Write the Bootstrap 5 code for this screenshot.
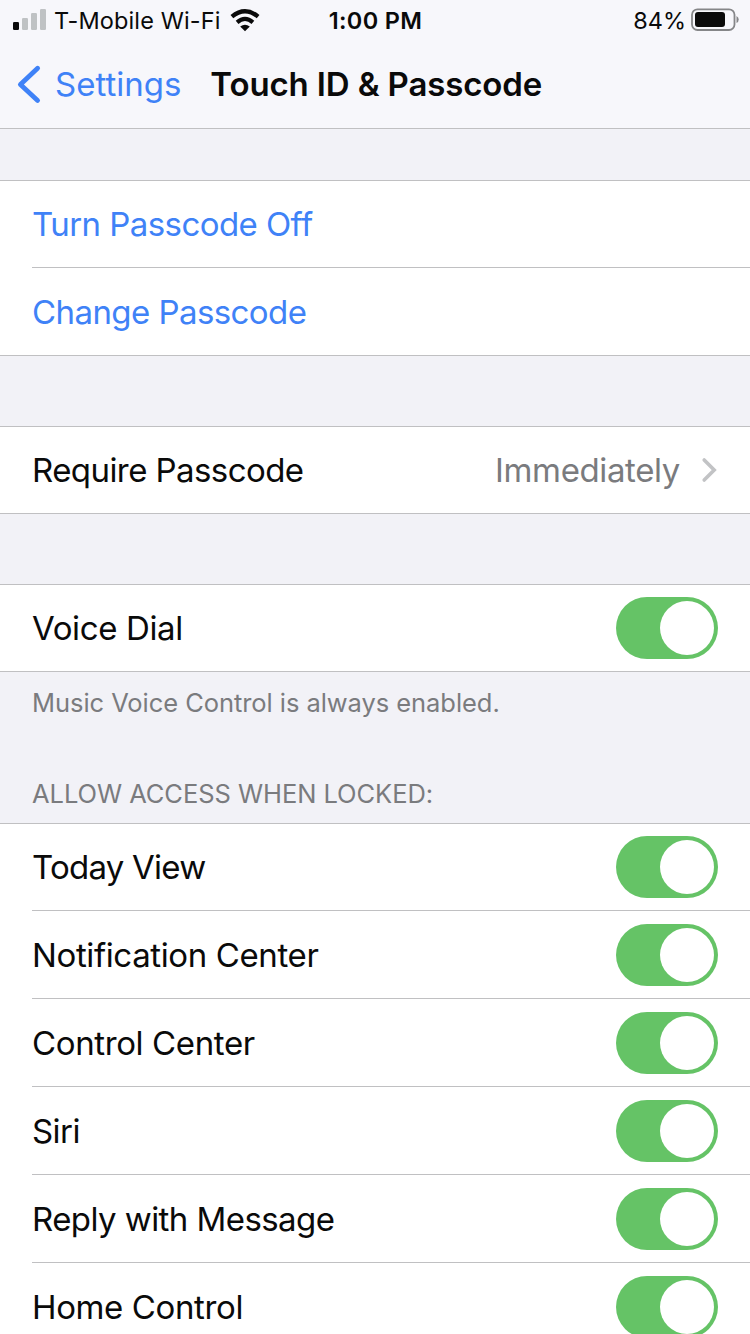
<!DOCTYPE html>
<html lang="en">
<head>
<meta charset="utf-8">
<meta name="viewport" content="width=device-width, initial-scale=1">
<title>Touch ID &amp; Passcode</title>
<link rel="stylesheet" href="https://cdn.jsdelivr.net/npm/bootstrap@5.3.0/dist/css/bootstrap.min.css">
<style>
  :root { --line: #c0c0c2; --blue: #3f82f7; --page: #f2f2f7; --grey: #7a7b7e; }
  html, body { height: 1334px; overflow: hidden; }
  body { background: var(--page); color: #0a0a0a; font-family: Inter, "Liberation Sans", sans-serif; width: 750px; }
  svg { display: block; flex: none; }

  /* status bar and navigation bar */
  .top-area { height: 129px; background: #f7f7fb; border-bottom: 1px solid var(--line); }
  .status-line { height: 41px; font-size: 23.5px; line-height: 41px; padding: 0 11px 0 13px; }
  .status-line .side { width: 315px; }
  .carrier { margin-left: 7px; letter-spacing: .12px; }
  .wifi { margin-left: 9px; }
  .clock { letter-spacing: .3px; margin-right: 1px; }
  .charge { margin-right: 5px; }
  .title-line { height: 87px; padding-left: 17px; font-size: 33px; line-height: 87px; }
  .back-link { color: var(--blue); margin-left: 14px; }
  .page-title { margin-left: 29px; letter-spacing: -.14px; }

  /* grouped settings rows */
  .group-list { background: #fff; border-top: 1px solid var(--line); border-bottom: 1px solid var(--line); }
  .setting { margin-left: 32px; padding: 13px 32px 12px 0; border-bottom: 1px solid var(--line); font-size: 33px; line-height: 62px; letter-spacing: -.57px; }
  .setting:first-child { padding-top: 12px; }
  .setting:last-child { border-bottom: 0; }
  .setting > * { height: 62px; }
  .action { color: var(--blue); }
  .gap-top { margin-top: 51px; }
  .gap-mid { margin-top: 70px; }
  .value-text { color: var(--grey); }
  .track-a { letter-spacing: -.38px; }
  .track-b { letter-spacing: -.75px; }
  .switch-on { width: 102px; height: 62px; padding: 4px; border-radius: 31px; background: #65c366; flex: none; }
  .knob { width: 54px; height: 54px; border-radius: 50%; background: #fff; }
  .note-text { color: var(--grey); font-size: 25.5px; line-height: 32px; padding-left: 32px; letter-spacing: -.06px; }
  .footnote { padding-top: 15px; height: 47px; }
  .heading { padding-top: 59px; height: 104px; }
</style>
</head>
<body>
<header class="top-area">
  <div class="status-line d-flex justify-content-between">
    <div class="side d-flex">
      <svg width="34" height="41" viewBox="0 0 34 41"><rect x="0" y="22" width="6" height="8" rx="1.3" fill="#0a0a0a"/><g fill="#bfc2c4"><rect x="9" y="18" width="6" height="12" rx="1.3"/><rect x="18" y="13" width="6" height="17" rx="1.3"/><rect x="27" y="9" width="6" height="21" rx="1.3"/></g></svg>
      <span class="carrier">T-Mobile Wi-Fi</span>
      <svg class="wifi" width="30" height="41" viewBox="0 0 30 41" fill="none" stroke="#0a0a0a"><path stroke-width="4.3" d="M1.9 16.6Q15 5.8 28.1 16.6"/><path stroke-width="4.2" d="M7.1 22.3Q15 15.5 22.9 22.3"/><path d="M10.2 26.6Q15 22.8 19.8 26.6L15 31.2Z" fill="#0a0a0a" stroke="none"/></svg>
    </div>
    <div class="clock fw-semibold">1:00 PM</div>
    <div class="side d-flex justify-content-end">
      <span class="charge">84%</span>
      <svg width="48" height="41" viewBox="0 0 48 41"><rect x="1" y="9.3" width="42.5" height="20.7" rx="5.5" fill="none" stroke="#858688" stroke-width="1.8"/><rect x="4" y="12" width="30" height="15" rx="3" fill="#0a0a0a"/><path d="M45.5 16q2.2 1 2.2 3.5t-2.2 3.5z" fill="#858688"/></svg>
    </div>
  </div>
  <nav class="title-line d-flex">
    <svg width="24" height="87" viewBox="0 0 24 87" fill="none" stroke="#3f82f7" stroke-width="4.8" stroke-linecap="round" stroke-linejoin="round"><path d="M20.6 27.2L3.4 43.5L20.6 59.4"/></svg>
    <span class="back-link">Settings</span>
    <span class="page-title fw-semibold">Touch ID &amp; Passcode</span>
  </nav>
</header>
<main>
  <section class="group-list gap-top">
    <div class="setting action"><div>Turn Passcode Off</div></div>
    <div class="setting action"><div>Change Passcode</div></div>
  </section>
  <section class="group-list gap-mid">
    <div class="setting d-flex">
      <span class="me-auto">Require Passcode</span>
      <span class="value-text track-a">Immediately</span>
      <svg width="38" height="62" viewBox="0 0 38 62" fill="none" stroke="#c2c3c5" stroke-width="3.6" stroke-linecap="round"><path d="M24.2 21L34.2 31L24.2 41"/></svg>
    </div>
  </section>
  <section class="group-list gap-mid">
    <div class="setting d-flex justify-content-between"><span class="track-a">Voice Dial</span><div class="switch-on d-flex justify-content-end"><div class="knob"></div></div></div>
  </section>
  <div class="note-text footnote">Music Voice Control is always enabled.</div>
  <div class="note-text heading">ALLOW ACCESS WHEN LOCKED:</div>
  <section class="group-list">
    <div class="setting d-flex justify-content-between"><span class="track-b">Today View</span><div class="switch-on d-flex justify-content-end"><div class="knob"></div></div></div>
    <div class="setting d-flex justify-content-between"><span class="track-a">Notification Center</span><div class="switch-on d-flex justify-content-end"><div class="knob"></div></div></div>
    <div class="setting d-flex justify-content-between"><span class="track-a">Control Center</span><div class="switch-on d-flex justify-content-end"><div class="knob"></div></div></div>
    <div class="setting d-flex justify-content-between"><span>Siri</span><div class="switch-on d-flex justify-content-end"><div class="knob"></div></div></div>
    <div class="setting d-flex justify-content-between"><span>Reply with Message</span><div class="switch-on d-flex justify-content-end"><div class="knob"></div></div></div>
    <div class="setting d-flex justify-content-between"><span class="track-a">Home Control</span><div class="switch-on d-flex justify-content-end"><div class="knob"></div></div></div>
  </section>
</main>
<script src="https://cdn.jsdelivr.net/npm/bootstrap@5.3.0/dist/js/bootstrap.bundle.min.js"></script>
</body>
</html>
